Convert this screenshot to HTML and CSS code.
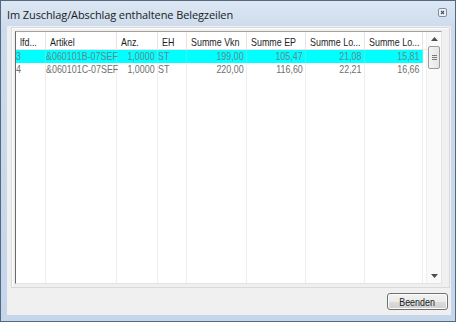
FILE: index.html
```html
<!DOCTYPE html>
<html lang="de">
<head>
<meta charset="utf-8">
<title>Im Zuschlag/Abschlag enthaltene Belegzeilen</title>
<link rel="stylesheet" href="styles.css">
</head>
<body>
<div class="window">
  <div class="titlebar">
    <span class="title">Im Zuschlag/Abschlag enthaltene Belegzeilen</span>
    <span class="close"><svg width="9" height="9" viewBox="0 0 9 9"><rect x="0.5" y="0.5" width="8" height="8" rx="1.5" fill="#eef2f7" stroke="#7f8ea3"/><path d="M3 3 L6 6 M6 3 L3 6" stroke="#4a5566" stroke-width="1.2"/></svg></span>
  </div>
  <div class="client">
    <div class="panel">
      <div class="list">
        <div class="grid">
          <div class="hd"><span>lfd...</span></div>
          <div class="hd"><span>Artikel</span></div>
          <div class="hd"><span>Anz.</span></div>
          <div class="hd"><span>EH</span></div>
          <div class="hd"><span>Summe Vkn</span></div>
          <div class="hd"><span>Summe EP</span></div>
          <div class="hd"><span>Summe Lo...</span></div>
          <div class="hd"><span>Summe Lo...</span></div>
          <div class="hdfill"></div>

          <div class="c sel"><span>3</span></div>
          <div class="c sel"><span>&amp;060101B-07SEF</span></div>
          <div class="c sel r"><span>1,0000</span></div>
          <div class="c sel"><span>ST</span></div>
          <div class="c sel r"><span>199,00</span></div>
          <div class="c sel r"><span>105,47</span></div>
          <div class="c sel r"><span>21,08</span></div>
          <div class="c sel r"><span>15,81</span></div>
          <div class="fill"></div>

          <div class="c"><span>4</span></div>
          <div class="c"><span>&amp;060101C-07SEF</span></div>
          <div class="c r"><span>1,0000</span></div>
          <div class="c"><span>ST</span></div>
          <div class="c r"><span>220,00</span></div>
          <div class="c r"><span>116,60</span></div>
          <div class="c r"><span>22,21</span></div>
          <div class="c r"><span>16,66</span></div>
          <div class="fill"></div>

          <div class="c"></div>
          <div class="c"></div>
          <div class="c"></div>
          <div class="c"></div>
          <div class="c"></div>
          <div class="c"></div>
          <div class="c"></div>
          <div class="c"></div>
          <div class="fill"></div>
        </div>
        <div class="vscroll">
          <div class="arrow"><svg width="7" height="4" viewBox="0 0 7 4"><path d="M0 4 L3.5 0 L7 4 Z" fill="#4d4d4d"/></svg></div>
          <div class="thumb"><span></span><span></span><span></span></div>
          <div class="track"></div>
          <div class="arrow"><svg width="7" height="4" viewBox="0 0 7 4"><path d="M0 0 L3.5 4 L7 0 Z" fill="#4d4d4d"/></svg></div>
        </div>
      </div>
    </div>
    <div class="buttons">
      <button class="btn"><span>Beenden</span></button>
    </div>
  </div>
</div>
</body>
</html>
```

FILE: styles.css
```css
* { box-sizing: border-box; }
html, body { margin: 0; padding: 0; }
body { width: 456px; height: 322px; overflow: hidden; background: #cad9ec; }

.window {
  width: 456px;
  height: 322px;
  border: 1px solid #56687f;
  background: linear-gradient(#dce7f3, #cbdaec 30px, #c6d6ea);
  display: flex;
  flex-direction: column;
}

.titlebar {
  height: 25px;
  display: flex;
  align-items: flex-start;
  justify-content: space-between;
  padding: 0 8px 0 6px;
}
.title {
  font-family: "Open Sans", "Noto Sans", sans-serif;
  font-size: 11px;
  letter-spacing: -0.1px;
  color: #1b1b1b;
  line-height: 14px;
  margin-top: 7px;
}
.close { margin-top: 7px; display: block; line-height: 0; }

.client {
  margin: 0 4px 5px 6px;
  height: 289px;
  background: #f0f0f0;
  display: flex;
  flex-direction: column;
}

.panel {
  margin: 1px 1px 0 4px;
  height: 261px;
  border: 1px solid #d9d9d9;
  box-shadow: inset 1px 1px 0 #fff;
  padding: 3px 7px 3px 3px;
  display: flex;
}

.list {
  flex: 1;
  background: #fff;
  border-top: 1px solid #a0a0a0;
  border-left: 1px solid #696969;
  border-right: 1px solid #e3e3e3;
  border-bottom: 1px solid #e3e3e3;
  display: flex;
  font-family: "Liberation Sans", Arial, sans-serif;
  font-size: 11px;
}

.grid {
  flex: 1;
  display: grid;
  grid-template-columns: 30px 71px 41px 29px 60px 59px 59px 58px 1fr;
  grid-template-rows: 18px 13px 13px 1fr;
}

/* narrow (Arial Narrow-like) text */
.hd span, .c span, .btn span {
  display: inline-block;
  transform: scaleX(0.81);
  transform-origin: left center;
  white-space: nowrap;
}
.c.r span { transform-origin: right center; }

.hd {
  border-right: 1px solid #e5e5e5;
  border-bottom: 1px solid #e5e5e5;
  color: #1e1e1e;
  padding: 4px 0 0 4px;
  line-height: 12px;
  white-space: nowrap;
  overflow: hidden;
}
.hdfill { border-bottom: 1px solid #e5e5e5; }

.c {
  border-right: 1px solid #eeeeee;
  color: #6f6f6f;
  line-height: 13px;
  padding: 0 0 0 0;
  white-space: nowrap;
}
.c.r { text-align: right; padding-right: 2px; }
.c.sel { background: #00ffff; color: #668888; border-right-color: #40f4f4; }

.vscroll {
  width: 15px;
  background: #fafafa;
  border-left: 1px solid #f0f0f0;
  display: flex;
  flex-direction: column;
}
.arrow { height: 14px; display: flex; align-items: center; justify-content: center; }
.arrow svg { display: block; }
.thumb {
  height: 23px;
  margin: 0 1px;
  border: 1px solid #9b9b9b;
  border-radius: 2px;
  background: linear-gradient(to right, #f4f4f4, #e6e6e6);
  display: flex;
  flex-direction: column;
  align-items: center;
  justify-content: center;
  gap: 1px;
}
.thumb span { display: block; width: 5px; height: 1px; background: #7a7a7a; }
.track { flex: 1; }

.buttons {
  display: flex;
  justify-content: flex-end;
  padding: 5px 3px 0 0;
}
.btn {
  width: 61px;
  height: 17px;
  padding: 0;
  border: 1px solid #707070;
  border-radius: 3px;
  background: linear-gradient(#f2f2f2 0, #ebebeb 50%, #dddddd 51%, #cfcfcf 100%);
  box-shadow: inset 0 0 0 1px #fcfcfc;
  font-family: "Liberation Sans", Arial, sans-serif;
  font-size: 11px;
  color: #1a1a1a;
  line-height: 14px;
}
.btn span { transform-origin: center; }
```
